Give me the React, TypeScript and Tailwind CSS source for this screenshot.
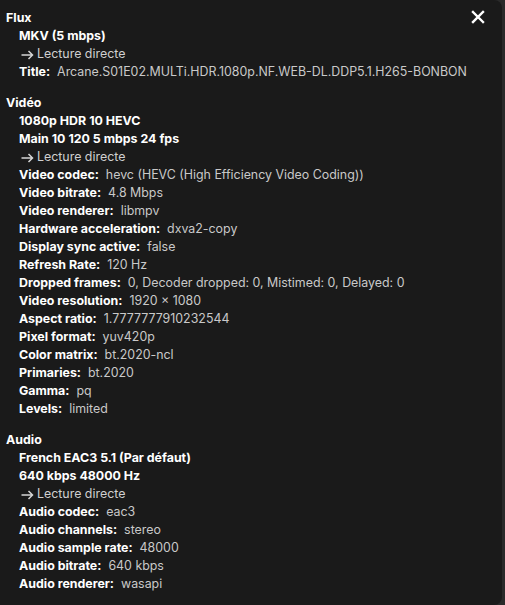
import React from "react";

type Row = { kind: "bold"; text: string } | { kind: "arrow" } | { kind: "kv"; k: string; v: string };

const sections: { title: string; rows: Row[] }[] = [
  {
    title: "Flux",
    rows: [
      { kind: "bold", text: "MKV (5 mbps)" },
      { kind: "arrow" },
      { kind: "kv", k: "Title:", v: "Arcane.S01E02.MULTi.HDR.1080p.NF.WEB-DL.DDP5.1.H265-BONBON" },
    ],
  },
  {
    title: "Vidéo",
    rows: [
      { kind: "bold", text: "1080p HDR 10 HEVC" },
      { kind: "bold", text: "Main 10 120 5 mbps 24 fps" },
      { kind: "arrow" },
      { kind: "kv", k: "Video codec:", v: "hevc (HEVC (High Efficiency Video Coding))" },
      { kind: "kv", k: "Video bitrate:", v: "4.8 Mbps" },
      { kind: "kv", k: "Video renderer:", v: "libmpv" },
      { kind: "kv", k: "Hardware acceleration:", v: "dxva2-copy" },
      { kind: "kv", k: "Display sync active:", v: "false" },
      { kind: "kv", k: "Refresh Rate:", v: "120 Hz" },
      { kind: "kv", k: "Dropped frames:", v: "0, Decoder dropped: 0, Mistimed: 0, Delayed: 0" },
      { kind: "kv", k: "Video resolution:", v: "1920 × 1080" },
      { kind: "kv", k: "Aspect ratio:", v: "1.7777777910232544" },
      { kind: "kv", k: "Pixel format:", v: "yuv420p" },
      { kind: "kv", k: "Color matrix:", v: "bt.2020-ncl" },
      { kind: "kv", k: "Primaries:", v: "bt.2020" },
      { kind: "kv", k: "Gamma:", v: "pq" },
      { kind: "kv", k: "Levels:", v: "limited" },
    ],
  },
  {
    title: "Audio",
    rows: [
      { kind: "bold", text: "French EAC3 5.1 (Par défaut)" },
      { kind: "bold", text: "640 kbps 48000 Hz" },
      { kind: "arrow" },
      { kind: "kv", k: "Audio codec:", v: "eac3" },
      { kind: "kv", k: "Audio channels:", v: "stereo" },
      { kind: "kv", k: "Audio sample rate:", v: "48000" },
      { kind: "kv", k: "Audio bitrate:", v: "640 kbps" },
      { kind: "kv", k: "Audio renderer:", v: "wasapi" },
    ],
  },
];

function RowView({ row }: { row: Row }) {
  if (row.kind === "bold") {
    return <div className="h-[18px] leading-[18px] font-bold text-white whitespace-nowrap">{row.text}</div>;
  }
  if (row.kind === "arrow") {
    return (
      <div className="h-[18px] leading-[18px] text-[#d0d0d0] flex items-center pl-[2px] whitespace-nowrap">
        <svg width="13" height="10" viewBox="0 0 13 10" fill="none" className="mr-[3px] mt-[1px]">
          <path d="M0.5 5H11.5M7.5 1L11.5 5L7.5 9" stroke="#d6d6d6" strokeWidth="1.5" />
        </svg>
        <span>Lecture directe</span>
      </div>
    );
  }
  return (
    <div className="h-[18px] leading-[18px] whitespace-nowrap">
      <span className="font-bold text-white">{row.k}</span>
      <span className="ml-[7px] text-[#c9c9c9]">{row.v}</span>
    </div>
  );
}

export default function App() {
  return (
    <div className="w-[505px] h-[605px] bg-[#2a2a2a] overflow-hidden">
      <div
        className="relative w-[502px] h-[605px] bg-[#1a1a1a] rounded-r-[8px] pt-[9px] pl-[6px] text-[12.4px] antialiased"
        style={{ fontFamily: "Inter, 'Noto Sans', sans-serif" }}
      >
        <button className="absolute right-[17px] top-[10px] w-[14px] h-[14px] flex items-center justify-center">
          <svg width="14" height="14" viewBox="0 0 14 14" fill="none">
            <path d="M2 2L12 12M12 2L2 12" stroke="white" strokeWidth="2.4" strokeLinecap="square" />
          </svg>
        </button>
        <div className="flex flex-col gap-[13px]">
          {sections.map((s) => (
            <div key={s.title}>
              <div className="h-[18px] leading-[18px] font-bold text-white">{s.title}</div>
              <div className="pl-[13px]">
                {s.rows.map((r, i) => (
                  <RowView key={i} row={r} />
                ))}
              </div>
            </div>
          ))}
        </div>
      </div>
    </div>
  );
}
